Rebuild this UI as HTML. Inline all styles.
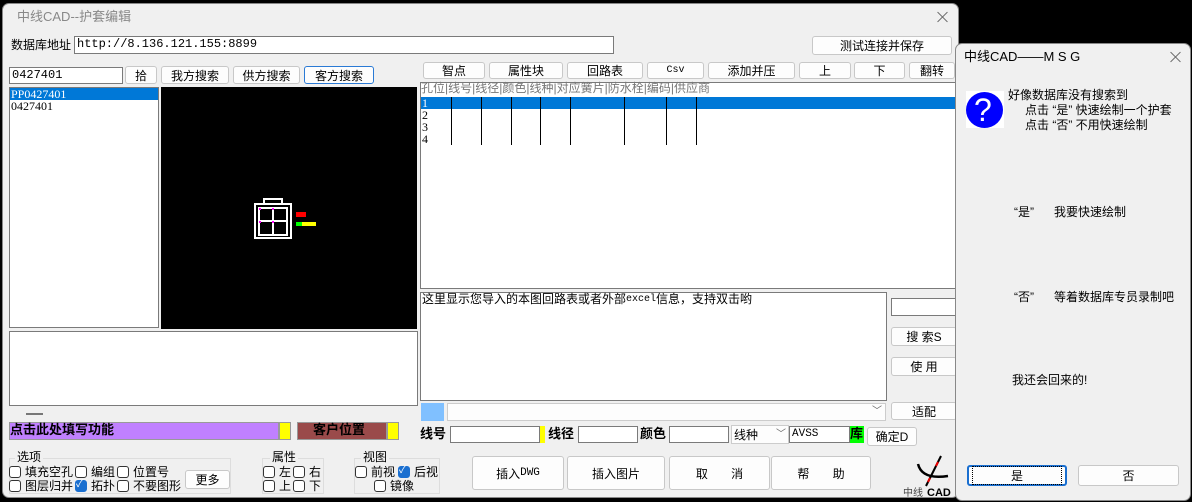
<!DOCTYPE html>
<html><head><meta charset="utf-8"><style>
*{box-sizing:border-box;margin:0;padding:0}
body{width:1192px;height:502px;background:#000;position:relative;overflow:hidden;font-family:"Liberation Sans","Noto Sans CJK SC",sans-serif;font-size:12px;color:#000}
.a{position:absolute}
.win{background:#f0f0f0;border:1px solid #888;border-radius:7px}
.in{position:absolute;background:#fff;border:1px solid #7a7a7a;font-family:"Liberation Mono","Noto Sans CJK SC",monospace;font-size:12px;line-height:15px;padding-left:2px;white-space:nowrap;overflow:hidden}
.btn{position:absolute;background:#fdfdfd;border:1px solid #c8c8c8;border-radius:3px;text-align:center;font-size:12px;display:flex;align-items:center;justify-content:center;white-space:nowrap}
.cb{position:absolute;width:12px;height:12px;border:1px solid #333;border-radius:3px;background:#fff}
.cb.on{background:#1a6fd0;border-color:#1a6fd0}
.t{position:absolute;white-space:nowrap;font-size:12px;line-height:14px}
.vl{position:absolute;width:1px;background:#000;top:97px;height:48px}
.bold{font-weight:bold;font-size:13px}
.m{font-family:"Liberation Mono",monospace;font-size:11px;vertical-align:middle}
.x{position:absolute;width:12px;height:12px}
.x:before,.x:after{content:"";position:absolute;left:5px;top:-1px;width:1px;height:14px;background:#666;transform:rotate(45deg)}
.x:after{transform:rotate(-45deg)}
</style></head><body>
<div class="a win" style="left:2px;top:3px;width:957px;height:495px"></div>
<div class="t" style="left:17px;top:10px;color:#888;font-size:13px">中线CAD--护套编辑</div>
<div class="x" style="left:937px;top:11px"></div>

<div class="t" style="left:11px;top:38px;font-size:12px">数据库地址</div>
<div class="in" style="left:74px;top:36px;width:540px;height:18px">http://8.136.121.155:8899</div>
<div class="btn" style="left:812px;top:36px;width:140px;height:19px">测试连接并保存</div>

<div class="in" style="left:9px;top:67px;width:114px;height:17px">0427401</div>
<div class="btn" style="left:125px;top:66px;width:32px;height:18px">拾</div>
<div class="btn" style="left:161px;top:66px;width:68px;height:18px">我方搜索</div>
<div class="btn" style="left:233px;top:66px;width:67px;height:18px">供方搜索</div>
<div class="btn" style="left:304px;top:66px;width:70px;height:18px;border-color:#2a7ad5">客方搜索</div>

<div class="a" style="left:9px;top:87px;width:150px;height:241px;background:#fff;border:1px solid #7a7a7a"></div>
<div class="a" style="left:10px;top:88px;width:148px;height:12px;background:#0078d7"></div>
<div class="t" style="left:11px;top:87px;color:#fff;font-family:'Liberation Serif',serif;font-size:12px">PP0427401</div>
<div class="t" style="left:11px;top:99px;font-family:'Liberation Serif',serif;font-size:12px">0427401</div>

<div class="a" style="left:161px;top:87px;width:256px;height:242px;background:#000"></div>
<svg class="a" style="left:250px;top:198px" width="70" height="46" viewBox="0 0 70 46">
<g fill="none" stroke="#fff" stroke-width="2">
<rect x="5" y="6" width="36" height="34"/>
<rect x="9" y="10" width="28" height="27"/>
<line x1="23" y1="10" x2="23" y2="37"/><line x1="9" y1="23" x2="37" y2="23"/>
<rect x="14" y="1" width="18" height="5"/>
</g>
<g fill="#f0f"><rect x="9" y="10" width="2" height="2"/><rect x="22" y="10" width="2" height="2"/><rect x="9" y="23" width="2" height="2"/><rect x="22" y="23" width="2" height="2"/></g>
<rect x="46" y="14" width="10" height="5" fill="#f00"/>
<rect x="46" y="24" width="6" height="4" fill="#0f0"/><rect x="52" y="24" width="14" height="4" fill="#ff0"/>
</svg>

<div class="btn" style="left:423px;top:62px;width:62px;height:17px">智点</div>
<div class="btn" style="left:489px;top:62px;width:74px;height:17px">属性块</div>
<div class="btn" style="left:567px;top:62px;width:76px;height:17px">回路表</div>
<div class="btn" style="left:647px;top:62px;width:57px;height:17px"><span class="m" style="font-size:10px">Csv</span></div>
<div class="btn" style="left:708px;top:62px;width:87px;height:17px">添加并压</div>
<div class="btn" style="left:799px;top:62px;width:52px;height:17px">上</div>
<div class="btn" style="left:854px;top:62px;width:51px;height:17px">下</div>
<div class="btn" style="left:909px;top:62px;width:46px;height:17px">翻转</div>

<div class="a" style="left:420px;top:82px;width:536px;height:207px;background:#fff;border:1px solid #7a7a7a"></div>
<div class="t" style="left:421px;top:81px;color:#777;font-size:12px">孔位|线号|线径|颜色|线种|对应簧片|防水栓|编码|供应商</div>
<div class="a" style="left:421px;top:97px;width:534px;height:12px;background:#0078d7"></div>
<div class="t" style="left:422px;top:96px;color:#fff;font-family:'Liberation Serif',serif">1</div>
<div class="t" style="left:422px;top:108px;font-family:'Liberation Serif',serif">2</div>
<div class="t" style="left:422px;top:120px;font-family:'Liberation Serif',serif">3</div>
<div class="t" style="left:422px;top:132px;font-family:'Liberation Serif',serif">4</div>
<div class="vl" style="left:451px"></div><div class="vl" style="left:481px"></div><div class="vl" style="left:511px"></div><div class="vl" style="left:540px"></div><div class="vl" style="left:570px"></div><div class="vl" style="left:624px"></div><div class="vl" style="left:666px"></div><div class="vl" style="left:696px"></div>

<div class="a" style="left:420px;top:292px;width:467px;height:109px;background:#fff;border:1px solid #7a7a7a"></div>
<div class="t" style="left:422px;top:292px;font-size:12px">这里显示您导入的本图回路表或者外部<span class="m" style="font-size:10px">excel</span>信息，支持双击哟</div>
<div class="in" style="left:891px;top:298px;width:66px;height:18px"></div>
<div class="btn" style="left:891px;top:327px;width:66px;height:19px">搜 索S</div>
<div class="btn" style="left:891px;top:357px;width:66px;height:19px">使 用</div>

<div class="a" style="left:9px;top:331px;width:409px;height:75px;background:#fff;border:1px solid #7a7a7a"></div>
<div class="a" style="left:26px;top:413px;width:17px;height:2px;background:#777"></div>
<div class="a" style="left:9px;top:422px;width:270px;height:18px;background:#c080ff;border:1px solid #999"></div>
<div class="t bold" style="left:10px;top:423px">点击此处填写功能</div>
<div class="a" style="left:279px;top:422px;width:12px;height:18px;background:#ff0;border:1px solid #999"></div>
<div class="a" style="left:297px;top:422px;width:90px;height:18px;background:#9a4a4a;border:1px solid #999"></div>
<div class="t bold" style="left:313px;top:423px">客户位置</div>
<div class="a" style="left:387px;top:422px;width:12px;height:18px;background:#ff0;border:1px solid #999"></div>

<div class="a" style="left:421px;top:403px;width:23px;height:18px;background:#80c0ff"></div>
<div class="a" style="left:447px;top:403px;width:439px;height:18px;background:#fdfdfd;border:1px solid #ccc"></div>
<div class="t" style="left:872px;top:405px;color:#666;font-size:10px">﹀</div>
<div class="btn" style="left:891px;top:402px;width:66px;height:18px">适配</div>

<div class="t bold" style="left:420px;top:427px">线号</div>
<div class="in" style="left:450px;top:426px;width:90px;height:17px"></div>
<div class="a" style="left:540px;top:426px;width:5px;height:17px;background:#ff0"></div>
<div class="t bold" style="left:548px;top:427px">线径</div>
<div class="in" style="left:578px;top:426px;width:60px;height:17px"></div>
<div class="t bold" style="left:640px;top:427px">颜色</div>
<div class="in" style="left:669px;top:426px;width:60px;height:17px"></div>
<div class="a" style="left:731px;top:425px;width:58px;height:19px;background:#fdfdfd;border:1px solid #ccc"></div>
<div class="t" style="left:734px;top:428px">线种</div>
<div class="t" style="left:776px;top:428px;color:#666;font-size:10px">﹀</div>
<div class="in" style="left:789px;top:426px;width:61px;height:17px;font-size:11px">AVSS</div>
<div class="a" style="left:850px;top:426px;width:14px;height:17px;background:#0f0"></div>
<div class="t bold" style="left:850px;top:427px">库</div>
<div class="btn" style="left:867px;top:427px;width:50px;height:19px">确定D</div>

<div class="btn" style="left:472px;top:456px;width:92px;height:34px">插入<span class="m">DWG</span></div>
<div class="btn" style="left:567px;top:456px;width:98px;height:34px">插入图片</div>
<div class="btn" style="left:669px;top:456px;width:101px;height:34px">取&nbsp;&nbsp;&nbsp;&nbsp;&nbsp;&nbsp;&nbsp;消</div>
<div class="btn" style="left:771px;top:456px;width:100px;height:34px">帮&nbsp;&nbsp;&nbsp;&nbsp;&nbsp;&nbsp;&nbsp;助</div>

<svg class="a" style="left:900px;top:452px" width="60" height="46" viewBox="0 0 60 46">
<path d="M18 12 Q22 28 48 24" fill="none" stroke="#000" stroke-width="2.5"/>
<path d="M41 4 L26 34" stroke="#000" stroke-width="2"/>
<path d="M38 10 L36 14 M30 26 L28 30" stroke="#e00" stroke-width="2"/>
<text x="3" y="44" font-size="10" font-family="Noto Sans CJK SC" fill="#444">中线</text>
<text x="27" y="44" font-size="11" font-weight="bold" font-family="Liberation Sans">CAD</text>
</svg>

<div class="a" style="left:9px;top:458px;width:222px;height:36px;border:1px solid #ddd"></div>
<div class="t" style="left:15px;top:450px;background:#f0f0f0;padding:0 2px;font-size:12px">选项</div>
<div class="cb" style="left:9px;top:466px"></div><div class="t" style="left:25px;top:465px">填充空孔</div>
<div class="cb" style="left:75px;top:466px"></div><div class="t" style="left:91px;top:465px">编组</div>
<div class="cb" style="left:117px;top:466px"></div><div class="t" style="left:133px;top:465px">位置号</div>
<div class="cb" style="left:9px;top:480px"></div><div class="t" style="left:25px;top:479px">图层归并</div>
<div class="cb on" style="left:75px;top:480px"></div><div class="t" style="left:76px;top:478px;color:#fff;font-size:10px">✓</div><div class="t" style="left:91px;top:479px">拓扑</div>
<div class="cb" style="left:117px;top:480px"></div><div class="t" style="left:133px;top:479px">不要图形</div>
<div class="btn" style="left:185px;top:470px;width:45px;height:19px">更多</div>

<div class="a" style="left:262px;top:458px;width:62px;height:36px;border:1px solid #ddd"></div>
<div class="t" style="left:270px;top:450px;background:#f0f0f0;padding:0 2px">属性</div>
<div class="cb" style="left:263px;top:466px"></div><div class="t" style="left:279px;top:465px">左</div>
<div class="cb" style="left:293px;top:466px"></div><div class="t" style="left:309px;top:465px">右</div>
<div class="cb" style="left:263px;top:480px"></div><div class="t" style="left:279px;top:479px">上</div>
<div class="cb" style="left:293px;top:480px"></div><div class="t" style="left:309px;top:479px">下</div>

<div class="a" style="left:354px;top:458px;width:86px;height:36px;border:1px solid #ddd"></div>
<div class="t" style="left:361px;top:450px;background:#f0f0f0;padding:0 2px">视图</div>
<div class="cb" style="left:355px;top:466px"></div><div class="t" style="left:371px;top:465px">前视</div>
<div class="cb on" style="left:398px;top:466px"></div><div class="t" style="left:399px;top:464px;color:#fff;font-size:10px">✓</div><div class="t" style="left:414px;top:465px">后视</div>
<div class="cb" style="left:374px;top:480px"></div><div class="t" style="left:390px;top:479px">镜像</div>

<div class="a" style="left:955px;top:43px;width:236px;height:458px;background:#f0f0f0;border:1px solid #888;border-radius:7px"></div>
<div class="t" style="left:964px;top:50px;font-size:13px">中线CAD——M S G</div>
<div class="x" style="left:1170px;top:51px"></div>
<div class="a" style="left:966px;top:91px;width:38px;height:37px;background:#fff"></div>
<div class="a" style="left:966px;top:92px;width:37px;height:36px;border-radius:50%;background:#0000ff"></div>
<div class="t" style="left:974px;top:91px;color:#fff;font-size:32px;line-height:38px;font-family:'Liberation Sans',sans-serif">?</div>
<div class="t" style="left:1008px;top:88px;font-size:12px">好像数据库没有搜索到</div>
<div class="t" style="left:1025px;top:103px;font-size:12px">点击 “是” 快速绘制一个护套</div>
<div class="t" style="left:1025px;top:118px;font-size:12px">点击 “否” 不用快速绘制</div>
<div class="t" style="left:1014px;top:205px">“是”&nbsp;&nbsp;&nbsp;&nbsp;&nbsp;&nbsp;我要快速绘制</div>
<div class="t" style="left:1014px;top:290px">“否”&nbsp;&nbsp;&nbsp;&nbsp;&nbsp;&nbsp;等着数据库专员录制吧</div>
<div class="t" style="left:1012px;top:373px">我还会回来的!</div>
<div class="btn" style="left:967px;top:465px;width:100px;height:21px;border:2px solid #1a6fd0"><span style="border:1px dotted #000;padding:0 38px">是</span></div>
<div class="btn" style="left:1078px;top:465px;width:101px;height:21px">否</div>
</body></html>
